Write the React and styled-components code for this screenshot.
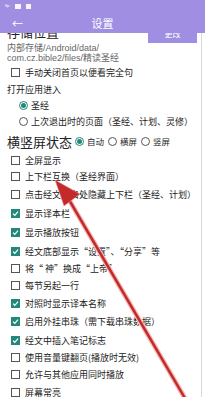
import React from 'react';
import styled, { createGlobalStyle } from 'styled-components';

const Global = createGlobalStyle`
  html, body { margin: 0; padding: 0; background: #fff; }
  body { font-family: "Noto Sans CJK SC", "Noto Sans", sans-serif; }
`;

const Screen = styled.div`
  position: relative;
  width: 205px;
  height: 397px;
  overflow: hidden;
  background: #fff;
  display: flex;
  flex-direction: column;
`;

const Header = styled.div`
  background: #a08ee2;
  height: 33px;
  flex-shrink: 0;
  display: flex;
  flex-direction: column;
`;

const StatusBar = styled.div`
  height: 12px;
  display: flex;
  align-items: center;
  gap: 5px;
  padding-left: 5px;
  color: #fff;
  font-size: 6px;
`;

const StatusIcon = styled.span`
  display: inline-block;
  width: ${p => p.w || 5}px;
  height: 5px;
  background: #fff;
  opacity: 0.9;
`;

const AppBar = styled.div`
  flex: 1;
  display: flex;
  align-items: center;
  padding-left: 12px;
  color: #fff;
`;

const Back = styled.span`
  width: 14px;
  font-size: 11px;
  line-height: 16px;
`;

const Title = styled.div`
  flex: 1;
  text-align: center;
  font-size: 11px;
  line-height: 16px;
  padding-right: 26px;
`;

const Content = styled.div`
  flex: 1;
  overflow: hidden;
  border-right: 1px solid #d8d8d8;
  margin-right: 3px;
`;

const Inner = styled.div`
  margin-top: -9px;
  padding: 0 0 0 7px;
  display: flex;
  flex-direction: column;
`;

const StorageRow = styled.div`
  display: flex;
  justify-content: space-between;
  align-items: flex-start;
  padding-right: 4px;
`;

const Heading = styled.div`
  font-size: 13px;
  line-height: 16px;
  color: #222;
`;

const ChangeBtn = styled.div`
  margin-top: 4px;
  width: 49px;
  height: 15px;
  background: #a08ee2;
  color: #fff;
  font-size: 8px;
  line-height: 12px;
  text-align: center;
`;

const Path = styled.div`
  font-size: 9px;
  line-height: 10px;
  color: #666;
  font-family: "Liberation Sans", "Noto Sans CJK SC", sans-serif;
`;

const Row = styled.div`
  display: flex;
  align-items: center;
  height: ${p => p.h || 18}px;
  padding-left: ${p => p.indent || 4}px;
  font-size: 9px;
  color: #222;
  white-space: nowrap;
`;

const Box = styled.span`
  width: 9px;
  height: 9px;
  box-sizing: border-box;
  border: 1px solid ${p => (p.checked ? '#22887c' : '#555')};
  background: ${p => (p.checked ? '#22887c' : '#fff')};
  margin-right: 5px;
  flex-shrink: 0;
  display: flex;
  align-items: center;
  justify-content: center;
`;

const Radio = styled.span`
  width: 9px;
  height: 9px;
  box-sizing: border-box;
  border-radius: 50%;
  border: 1px solid ${p => (p.checked ? '#22887c' : '#555')};
  margin-right: 3px;
  flex-shrink: 0;
  display: flex;
  align-items: center;
  justify-content: center;
  &::after {
    content: '';
    width: 5px;
    height: 5px;
    border-radius: 50%;
    background: ${p => (p.checked ? '#22887c' : 'transparent')};
  }
`;

const Label = styled.div`
  font-size: 9px;
  color: #222;
  height: 15px;
  display: flex;
  align-items: center;
`;

const OrientRow = styled.div`
  display: flex;
  align-items: center;
  height: 22px;
`;

const OrientTitle = styled.span`
  font-size: 13px;
  color: #222;
  margin-right: 3px;
`;

const OrientOpt = styled.span`
  display: flex;
  align-items: center;
  font-size: 8.5px;
  color: #222;
  margin-right: 4px;
`;

const Arrow = styled.svg`
  position: absolute;
  left: 0;
  top: 0;
  pointer-events: none;
`;

const Check = () => (
  <svg width="7" height="7" viewBox="0 0 10 10">
    <path d="M1.5 5.2 L4 7.6 L8.6 2.4" fill="none" stroke="#fff" strokeWidth="1.8" />
  </svg>
);

const CheckRow = ({ checked, children, h }) => (
  <Row h={h}>
    <Box checked={checked}>{checked && <Check />}</Box>
    {children}
  </Row>
);

const options = [
  { t: '全屏显示', h: 16 },
  { t: '上下栏互换（圣经界面）', h: 17 },
  { t: '点击经文空白处隐藏上下栏（圣经、计划）', h: 19 },
  { t: '显示译本栏', c: true, h: 19 },
  { t: '显示播放按钮', c: true, h: 19 },
  { t: '经文底部显示“设置”、“分享”等', c: true, h: 18 },
  { t: '将“ 神”换成“上帝”', h: 17 },
  { t: '每节另起一行', h: 17 },
  { t: '对照时显示译本名称', c: true, h: 18 },
  { t: '启用外挂串珠（需下载串珠数据）', c: true, h: 19 },
  { t: '经文中插入笔记标志', c: true, h: 18 },
  { t: '使用音量键翻页(播放时无效)', h: 17 },
  { t: '允许与其他应用同时播放', h: 17 },
  { t: '屏幕常亮', h: 18 },
];

export default function App() {
  return (
    <>
      <Global />
      <Screen>
        <Header>
          <StatusBar>
            <span>⁹ᵖ</span>
            <StatusIcon w={6} />
            <StatusIcon w={5} />
          </StatusBar>
          <AppBar>
            <Back>←</Back>
            <Title>设置</Title>
          </AppBar>
        </Header>
        <Content>
          <Inner>
            <StorageRow>
              <Heading>存储位置</Heading>
              <ChangeBtn>更改</ChangeBtn>
            </StorageRow>
            <Path>内部存储/Android/data/</Path>
            <Path>com.cz.bible2/files/精读圣经</Path>
            <CheckRow h={19}>手动关闭首页以便看完全句</CheckRow>
            <Label>打开应用进入</Label>
            <Row indent={12} h={16}>
              <Radio checked />圣经
            </Row>
            <Row indent={12} h={17}>
              <Radio />上次退出时的页面（圣经、计划、灵修）
            </Row>
            <OrientRow>
              <OrientTitle>横竖屏状态</OrientTitle>
              <OrientOpt><Radio checked />自动</OrientOpt>
              <OrientOpt><Radio />横屏</OrientOpt>
              <OrientOpt><Radio />竖屏</OrientOpt>
            </OrientRow>
            {options.map(o => (
              <CheckRow key={o.t} checked={o.c} h={o.h}>{o.t}</CheckRow>
            ))}
          </Inner>
        </Content>
        <Arrow width="205" height="397" viewBox="0 0 205 397">
          <line x1="68" y1="198" x2="186" y2="400" stroke="#f3b9b9" strokeWidth="5" strokeLinecap="round" />
          <line x1="68" y1="198" x2="186" y2="400" stroke="#c42a2a" strokeWidth="2.5" />
          <polygon points="55,180 80,194 64,206" fill="#c42a2a" stroke="#e99" strokeWidth="0.6" />
        </Arrow>
      </Screen>
    </>
  );
}
